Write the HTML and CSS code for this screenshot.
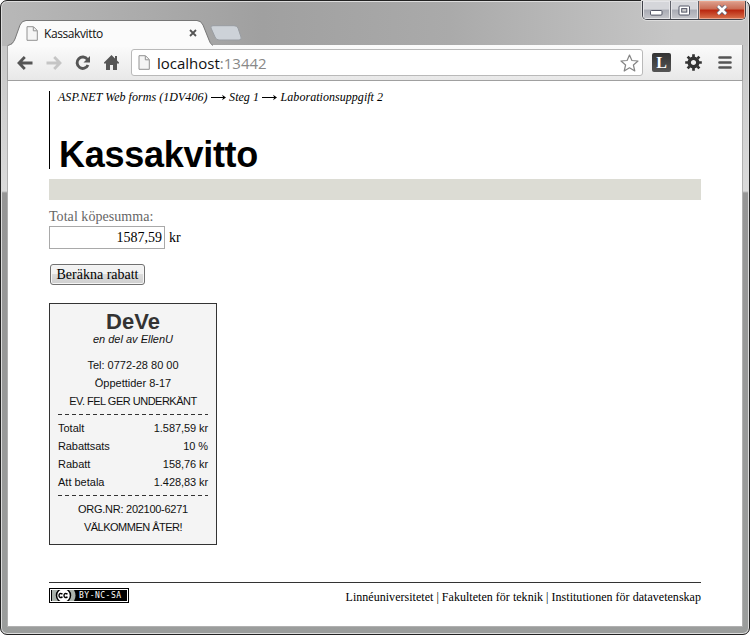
FILE: index.html
```
<!DOCTYPE html>
<html lang="sv">
<head>
<meta charset="utf-8">
<title>Kassakvitto</title>
<link rel="stylesheet" href="styles.css">
</head>
<body>
<div class="window">
  <header class="titlebar">
    <div class="tab">
      <svg class="tab-shape" width="203" height="27" viewBox="0 0 203 27"><path d="M0 26.5C4 25 5 24 7 19L12 5Q14 1 18 1H189Q193 1 195 5L201 20Q203 25 207 26.5Z" fill="#fbfbfb"/><path d="M0 25.5C4 24 5 23 7 19L12 5Q14 .5 18 .5H189Q193 .5 195 5L201 20Q202 24 205 25.5" fill="none" stroke="#777"/></svg>
      <svg class="doc" width="12" height="15" viewBox="0 0 12 15"><path d="M1 .7H7.5L11.3 4.5V14.3H1Z" fill="#f5f5f5" stroke="#929292"/><path d="M7.3 1V4.8H11" fill="none" stroke="#929292"/></svg>
      <span class="tab-title">Kassakvitto</span>
      <svg class="tab-close" width="8" height="8" viewBox="0 0 8 8"><path d="M1 1L7 7M7 1L1 7" stroke="#555" stroke-width="1.8"/></svg>
    </div>
    <svg class="new-tab" width="32" height="16" viewBox="0 0 32 16"><path d="M3 .7H24Q27 .7 28 3L31 12Q32 15 29 15H9Q6 15 5 12L1 3Q0 .7 3 .7Z" fill="#cdd2d8" stroke="#999da2"/></svg>
    <div class="controls">
      <span class="control"><svg width="13" height="6" viewBox="0 0 13 6"><rect x=".5" y=".5" width="11.5" height="4.6" rx="1" fill="#fff" stroke="#535666"/></svg></span>
      <span class="control"><svg width="13" height="11" viewBox="0 0 13 11"><rect x="1" y="1" width="10.5" height="9" rx="1" fill="#fff" stroke="#535666"/><rect x="3.7" y="3.6" width="5.1" height="3.5" fill="#ccc" stroke="#535666"/></svg></span>
      <span class="control close"><svg width="12" height="10" viewBox="0 0 12 10"><path d="M2 1L10 9M10 1L2 9" stroke="#626070" stroke-width="4.4"/><path d="M2 1L10 9M10 1L2 9" stroke="#fff" stroke-width="2.6"/></svg></span>
    </div>
  </header>
  <nav class="toolbar">
    <svg width="16" height="14" viewBox="0 0 16 14"><path d="M15.500 7H3M7.800 1L2 7L7.800 13" fill="none" stroke="#555" stroke-width="2.800"/></svg>
    <svg width="16" height="14" viewBox="0 0 16 14"><path d="M.5 7H13M8.200 1L14 7L8.200 13" fill="none" stroke="#c5c5c5" stroke-width="2.800"/></svg>
    <svg width="16" height="16" viewBox="0 0 16 16"><path d="M12.500 4.500A5.700 5.700 0 1 0 13 10" fill="none" stroke="#555" stroke-width="2.900"/><path d="M15 1V7.500H8.500Z" fill="#555"/></svg>
    <svg width="15" height="15" viewBox="0 0 15 15"><path d="M7.500 0L11 3.400V1H13V5.400L15 7.500V8.500H13V15H9V10H6V15H2V8.500H0V7.500Z" fill="#555"/></svg>
    <div class="omnibox">
      <svg width="12" height="15" viewBox="0 0 12 15"><path d="M1 .7H7.500L11.300 4.500V14.300H1Z" fill="#f5f5f5" stroke="#929292"/><path d="M7.300 1V4.800H11" fill="none" stroke="#929292"/></svg>
      <span class="url">localhost<span class="port">:13442</span></span>
      <svg class="star" width="19" height="18" viewBox="0 0 19 18"><path d="M9.500 1L11.900 6.500L18 7L13.400 11L14.800 17L9.500 13.800L4.200 17L5.600 11L1 7L7.100 6.500Z" fill="#fff" stroke="#858585" stroke-width="1.200" stroke-linejoin="round"/></svg>
    </div>
    <span class="extension">L</span>
    <svg class="gear" width="17" height="17" viewBox="-8.500 -8.500 17 17"><circle r="4.300" fill="none" stroke="#333" stroke-width="3.400"/><g stroke="#333" stroke-width="2.700"><path d="M0-8.300V-5M0 8.300V5M-8.300 0H-5M8.300 0H5M-5.900-5.900L-4-4M5.900 5.900L4 4M-5.900 5.900L-4 4M5.900-5.900L4-4"/></g></svg>
    <svg class="menu" width="14" height="13" viewBox="0 0 14 13"><path d="M1.500 1.500H12.500M1.500 6.500H12.500M1.500 11.500H12.500" stroke="#555" stroke-width="2.600" stroke-linecap="round"/></svg>
  </nav>
  <main class="page">
    <div class="heading">
      <div class="crumbs"><span>ASP.NET Web forms (1DV406)</span><svg width="15" height="7" viewBox="0 0 15 7"><path d="M0 3.500H13" fill="none" stroke="#000"/><path d="M11 .8L15 3.500L11 6.200L12.300 3.500Z"/></svg><span>Steg 1</span><svg width="15" height="7" viewBox="0 0 15 7"><path d="M0 3.500H13" fill="none" stroke="#000"/><path d="M11 .8L15 3.500L11 6.200L12.300 3.500Z"/></svg><span>Laborationsuppgift 2</span></div>
      <h1>Kassakvitto</h1>
    </div>
    <div class="band"></div>
    <form class="form">
      <label for="sum">Total köpesumma:</label>
      <div class="amount"><input id="sum" type="text" value="1587,59"><span>kr</span></div>
      <button type="button">Beräkna rabatt</button>
    </form>
    <section class="receipt">
      <h2>DeVe</h2>
      <p class="tagline">en del av EllenU</p>
      <p>Tel: 0772-28 80 00</p>
      <p>Öppettider 8-17</p>
      <p class="warning">EV. FEL GER UNDERKÄNT</p>
      <dl>
        <div><dt>Totalt</dt><dd>1.587,59 kr</dd></div>
        <div><dt class="rate">Rabattsats</dt><dd>10 %</dd></div>
        <div><dt>Rabatt</dt><dd>158,76 kr</dd></div>
        <div><dt>Att betala</dt><dd>1.428,83 kr</dd></div>
      </dl>
      <p class="org">ORG.NR: 202100-6271</p>
      <p class="welcome">VÄLKOMMEN ÅTER!</p>
    </section>
    <footer class="footer">
      <div class="license"><svg width="24" height="11" viewBox="0 0 24 11"><path d="M0 0H22Q25 5.500 22 11H0Z" fill="#aab2ab"/><circle cx="11.500" cy="5.500" r="7" fill="#fff" stroke="#000" stroke-width="1.500"/><path d="M10.500 4Q7 2.500 7 5.500T10.500 7M15.500 4Q12 2.500 12 5.500T15.500 7" fill="none" stroke="#000" stroke-width="1.400"/></svg><span>BY-NC-SA</span></div>
      <div class="links">Linnéuniversitetet | Fakulteten för teknik | Institutionen för datavetenskap</div>
    </footer>
  </main>
</div>
</body>
</html>
```
FILE: styles.css
```
* { box-sizing: border-box; }
html, body { margin: 0; height: 100%; overflow: hidden; background: #fff; }
svg { display: block; flex: none; }
.window {
  width: 750px; height: 635px; padding: 0 6px 7px;
  display: grid; grid-template-rows: 43px 36px 1fr; grid-template-columns: minmax(0, 1fr);
  border: 1px solid #222; border-radius: 7px;
  box-shadow: inset 0 0 0 1px #ddd;
  background: linear-gradient(90deg, #b8b8b8, #a0a0a0 35%, #aaa 60%, #c6c6c6 90%) 0 0 / 100% 45px no-repeat,
    linear-gradient(#c2c2c2 0, #dadada 190px, #969696 192px, #9b9d9c 100%);
}
.titlebar { display: flex; align-items: flex-start; padding-left: 1px; }
.tab { position: relative; display: flex; align-items: center; width: 203px; height: 26px; margin-top: 19px; padding: 0 18px; }
.tab-shape { position: absolute; left: 0; top: 0; overflow: visible; }
.doc { position: relative; }
.tab-title { position: relative; margin-left: 6px; font: 12px "Open Sans", sans-serif; letter-spacing: -.4px; color: #111; }
.tab-close { position: relative; margin-left: auto; margin-right: -4px; }
.new-tab { margin: 24px 0 0 -1px; }
.controls { display: flex; height: 19px; margin-left: auto; margin-right: -3px; border: 1px solid #40424a; border-top: 0; border-radius: 0 0 5px 5px; overflow: hidden; box-shadow: 0 0 0 1px #ddd; }
.control { display: grid; place-items: center; width: 28px; border-right: 1px solid #60626a; background: linear-gradient(#d5d6da 45%, #a9abb4 50%, #c5c6cb); box-shadow: inset 0 0 0 1px #e5e5e8; }
.control:first-child { padding-top: 5px; }
.control.close { width: 46px; border: 0; background: linear-gradient(#dda18f, #ca6b53 45%, #b9250e 50%, #d9734d); box-shadow: inset 0 0 0 1px #e9a58e; }
.toolbar { display: flex; align-items: center; padding: 0 8px 0 9px; gap: 13px; background: linear-gradient(#fbfbfb, #e8e8e8); border: 1px solid #a0a0a0; border-top: 0; margin-top: 1px; height: 36px; }
.omnibox { display: flex; align-items: center; width: 512px; height: 27px; margin-left: -1px; padding: 0 3px 0 6px; border: 1px solid #b9b9b9; border-radius: 3px; background: #fff; flex: none; }
.url { margin-left: 7px; font: 15px/20px "Open Sans", sans-serif; color: #111; }
.port { color: #888; }
.star { margin-left: auto; }
.extension { width: 19px; height: 19px; flex: none; margin-left: -4px; border-radius: 2px; background: linear-gradient(#333, #555); color: #fff; font: bold 16px/19px "Liberation Serif", serif; text-align: center; }
.gear { margin-left: 1px; }
.menu { margin-left: 3px; }
.page { padding: 10px 41px 0; background: #fff; border: solid #b0b0b0; border-width: 0 1px 1px; margin-top: 1px; }
.heading { height: 78px; border-left: 1px solid #000; padding-left: 8px; }
.crumbs { display: flex; align-items: center; height: 13px; gap: 3px; font: italic 12px/13px "Liberation Serif", serif; letter-spacing: .04px; white-space: nowrap; }
.crumbs svg { margin: 0 0.300px; }
h1 { margin: 29px 0 0 1px; font: bold 36px/44px "Liberation Sans", sans-serif; letter-spacing: -.28px; }
.band { height: 21px; margin-top: 10px; background: #dcdcd4; }
.form { font: 14px/16px "Liberation Serif", serif; padding-top: 9px; display: flex; flex-direction: column; align-items: flex-start; }
label { color: #666; letter-spacing: .05px; }
.amount { display: flex; align-items: center; gap: 4px; margin-top: 1px; }
input { width: 116px; height: 23px; padding: 1px 2px; border: 1px solid #a9a9a9; font: 14px "Liberation Serif", serif; text-align: right; }
button { width: 95px; height: 21px; margin: 15px 0 0 1px; padding: 0; border: 1px solid #707070; border-radius: 3px; background: linear-gradient(#f2f2f2 48%, #dcdcdc 50%, #cfcfcf); box-shadow: inset 0 0 0 1px #f5f5f5; font: 14px/18px "Liberation Serif", serif; color: #000; white-space: nowrap; }
.receipt { width: 168px; height: 242px; margin-top: 18px; padding: 6px 8px; border: 1px solid #333; background: #f4f4f4; font: 11px/18px "Liberation Sans", sans-serif; text-align: center; color: #111; }
h2 { margin: 0; font: bold 22px/23px "Liberation Sans", sans-serif; color: #333; }
p { margin: 0; white-space: nowrap; }
.tagline { font-style: italic; line-height: 12px; margin-bottom: 11px; }
.warning { letter-spacing: -.5px; }
.org { letter-spacing: -.27px; }
.welcome { letter-spacing: -.5px; }
dl { margin: 4px 0; padding: 5px 0; background: repeating-linear-gradient(90deg, #333 0 4px, transparent 4px 7px) 0 0 / 100% 1px no-repeat, repeating-linear-gradient(90deg, #333 0 4px, transparent 4px 7px) 0 100% / 100% 1px no-repeat; }
dl div { display: flex; justify-content: space-between; }
dd { margin: 0; letter-spacing: -.08px; }
.rate { letter-spacing: -.1px; }
.footer { display: flex; justify-content: space-between; align-items: flex-start; margin-top: 37px; padding-top: 5px; border-top: 1px solid #333; }
.license { display: flex; align-items: center; width: 80px; height: 15px; border: 1px solid #000; background: #000; box-shadow: inset 0 0 0 1px #fff; padding: 1px; overflow: hidden; }
.license span { margin-left: 3px; color: #fff; font: 8px/11px "DejaVu Sans Mono", monospace; letter-spacing: .5px; }
.license svg { margin-left: 1px; }
.links { font: 12px/18px "Liberation Serif", serif; letter-spacing: .027px; white-space: nowrap; }
```
